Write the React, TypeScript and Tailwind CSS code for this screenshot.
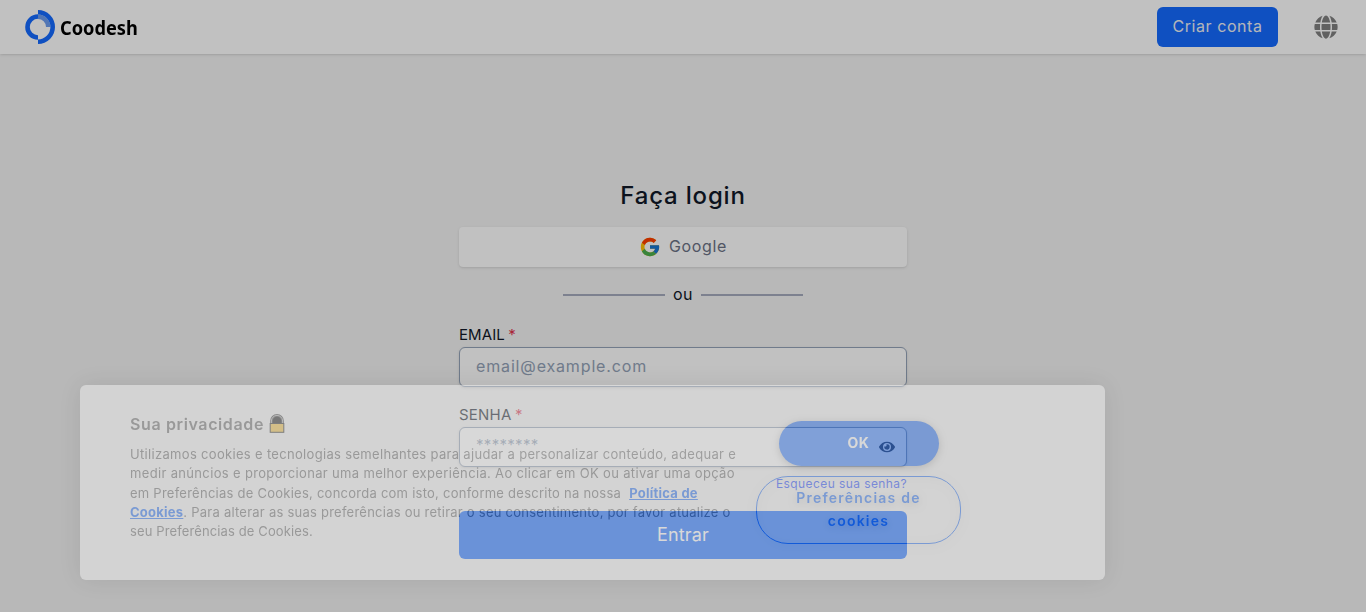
import type { ReactNode } from 'react';
import { FaEye, FaGlobe } from 'react-icons/fa';
import { FcGoogle } from 'react-icons/fc';

function Logo() {
  return (
    <div className="flex items-center">
      <svg width="30" height="34" viewBox="0 0 30 34" fill="none" className="shrink-0">
        <path d="M13 4.2A12.8 12.8 0 0 0 13 29.8V25.2A8.2 8.2 0 0 1 13 8.8Z" fill="#156aff" />
        <path d="M13 4.6A12.4 12.4 0 0 1 25.4 17H21A8 8 0 0 0 13 9Z" fill="#6c9cf0" />
        <path d="M13 0A17 17 0 0 1 13 34V29.4A12.4 12.4 0 0 0 13 4.6Z" fill="#156aff" />
      </svg>
      <span className="ml-[5px] origin-left scale-x-[0.91] pt-0.5 font-['Noto_Sans',sans-serif] text-[20px] leading-none font-bold text-black">
        Coodesh
      </span>
    </div>
  );
}

function Header() {
  return (
    <header className="flex h-[54px] items-center justify-between bg-white pr-7 pl-[25px] shadow">
      <Logo />
      <div className="flex items-center">
        <button className="mr-9 h-10 w-[121px] rounded-md bg-[#156aff] pb-0.5 text-base tracking-[0.56px] text-[#eef0f5]">
          Criar conta
        </button>
        <FaGlobe size={24} className="text-[#808080]" />
      </div>
    </header>
  );
}

function Label({ children, className }: { children: ReactNode; className: string }) {
  return (
    <label className={`block h-5 text-[15px] leading-5 font-normal text-gray-900 ${className}`}>
      {children} <span className="-ml-px text-[#e0324b]">*</span>
    </label>
  );
}

function LoginForm() {
  return (
    <main className="mx-auto w-[448px] pt-[126px]">
      <h1 className="h-8 text-center text-2xl leading-8 font-[450] tracking-[0.82px] text-gray-900">Faça login</h1>
      <button className="mt-[15px] flex h-10 w-full items-center justify-center rounded bg-white text-base tracking-[0.64px] text-[#6b7285] shadow">
        <FcGoogle size={22} className="mr-2" />
        <span className="pb-0.5">Google</span>
      </button>
      <div className="mt-4 flex h-6 items-center justify-center gap-2">
        <span className="h-0.5 w-[102px] bg-[#a5abbe]" />
        <span className="pb-0.5 text-base tracking-[0.47px] text-gray-900">ou</span>
        <span className="h-0.5 w-[102px] bg-[#a5abbe]" />
      </div>
      <Label className="mt-[18px] tracking-[0.1px]">EMAIL</Label>
      <input
        placeholder="email@example.com"
        className="mt-[2px] block h-10 w-full rounded-md border border-[#94a3b8] bg-white px-4 pb-[3px] text-base tracking-[0.85px] shadow-sm placeholder:text-[#94a3b8]"
      />
      <Label className="mt-[18px] tracking-[0.2px]">SENHA</Label>
      <div className="mt-[2px] flex h-10 items-center justify-between rounded-md border border-[#94a3b8] bg-white pr-[11px] pl-4 shadow-sm">
        <span className="pb-1 text-[15px] leading-4 tracking-[0.3px] text-[#94a3b8]">********</span>
        <FaEye size={16} className="text-gray-600" />
      </div>
      <a className="mt-[9px] block h-4 text-right text-xs leading-4 tracking-[0.41px] text-[#3358ff]">Esqueceu sua senha?</a>
      <button className="mt-[19px] block h-12 w-full rounded-md bg-[#156aff] text-lg tracking-[0.2px] text-white">Entrar</button>
    </main>
  );
}

function Padlock() {
  return (
    <svg width="16" height="20" viewBox="0 0 16 20" className="ml-[5px]">
      <path d="M2 9.5V7a6 6 0 0 1 12 0v2.5Z" fill="#111" />
      <path d="M2.4 9.5V7a5.6 5.6 0 0 1 11.2 0v2.5" fill="none" stroke="#444" strokeWidth="2.6" />
      <path d="M2.4 9.5V7a5.6 5.6 0 0 1 11.2 0v2.5" fill="none" stroke="#bbb" strokeWidth="1" />
      <rect x="1.2" y="9.5" width="13.6" height="8.8" fill="#ffc83d" stroke="#222" strokeWidth="1" />
    </svg>
  );
}

function CookieDialog() {
  return (
    <div className="absolute top-[385px] left-20 flex h-[195px] w-[1025px] rounded-md bg-white pl-[50px] opacity-[0.38] shadow-[0_0_24px_rgba(0,0,0,0.22)]">
      <section className="w-[626px] shrink-0 pt-[29px] whitespace-nowrap text-[#686868]">
        <h2 className="flex h-5 items-center text-base leading-5 font-semibold tracking-[0.62px]">
          Sua privacidade
          <Padlock />
        </h2>
        <div className="mt-[11px] text-[13px] leading-[19.3px]">
          <p className="tracking-[0.32px]">
            Utilizamos cookies e tecnologias semelhantes para ajudar a personalizar conteúdo, adequar e
          </p>
          <p className="tracking-[0.34px]">
            medir anúncios e proporcionar uma melhor experiência. Ao clicar em OK ou ativar uma opção
          </p>
          <p className="tracking-[0.25px]">
            em Preferências de Cookies, concorda com isto, conforme descrito na nossa
            <a className="ml-2 font-bold text-[#186cff] underline">Política de</a>
          </p>
          <p className="tracking-[0.24px]">
            <a className="font-bold text-[#186cff] underline">Cookies</a>. Para alterar as suas preferências ou retirar o
            seu consentimento, por favor atualize o
          </p>
          <p className="tracking-[0.12px]">seu Preferências de Cookies.</p>
        </div>
      </section>
      <div className="flex w-[205px] flex-col items-center pt-9">
        <button className="h-[45px] w-40 rounded-full bg-[#186cff] pb-0.5 text-sm font-bold tracking-[0.57px] text-white shadow-[0_2px_8px_rgba(0,0,0,0.3)]">
          OK
        </button>
        <button className="mt-2.5 h-[68px] w-[205px] rounded-[32px] border border-[#186cff] pb-0.5 text-sm leading-[23px] font-semibold tracking-[1.22px] text-[#186cff] [filter:drop-shadow(0_2px_4px_rgba(0,0,0,0.25))]">
          Preferências de
          <br />
          cookies
        </button>
      </div>
    </div>
  );
}

export default function App() {
  return (
    <div className="relative h-[612px] w-full overflow-hidden bg-[#f3f3f3] font-['Inter',sans-serif]">
      <Header />
      <LoginForm />
      <div className="absolute inset-0 bg-black/[0.243]" />
      <CookieDialog />
    </div>
  );
}
